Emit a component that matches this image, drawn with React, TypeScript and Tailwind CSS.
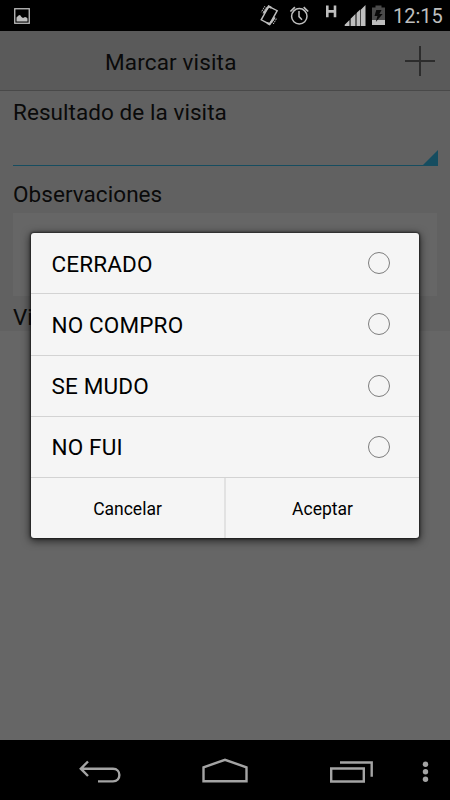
import { useState } from "react";

const options = ["CERRADO", "NO COMPRO", "SE MUDO", "NO FUI"];

function StatusBar() {
  return (
    <div className="flex h-[31px] items-center bg-black text-[#bebebe]">
      <svg className="ml-3.5 h-4 w-4" viewBox="0 0 16 16">
        <rect x="0.75" y="0.75" width="14.5" height="14.5" fill="none" stroke="currentColor" strokeWidth="1.3" />
        <path d="M2.5 13.5V9.5l2-2 1.5-.5 1.5 2 1.5 1 2-1 1.5.5 1 1v3z" fill="currentColor" />
      </svg>
      <svg className="ml-auto h-[31px] w-[135px]" viewBox="255 0 135 31" fill="none" stroke="currentColor">
        <path d="M268.7 6.4L277.2 10.7L269.6 24.2L261.2 19.8Z" strokeWidth="1.4" />
        <path d="M263.6 13.5L268.7 6.4L271.5 7.8M274.8 17.5L269.6 24.2L267 22.8" strokeWidth="2" />
        <path d="M264.8 6.2l-3.5 6M266.4 7.2l-3.5 6M273.3 24l3.6-6M271.5 23l3.6-6" strokeWidth="1" strokeDasharray="1.5 0.7" />
        <circle cx="299.3" cy="16.3" r="7.7" strokeWidth="1.5" />
        <path d="M299 11v5.6l3 3.2" strokeWidth="1.5" />
        <path d="M290.4 11.5l4.5-4.3M308.2 11.5l-4.5-4.3" strokeWidth="1.7" />
        <path d="M327.3 5.5v11.7M335 5.5v11.7M327.3 11.4h7.7" strokeWidth="2.6" />
        <g fill="currentColor" stroke="none">
          <path d="M344.7 26v-1.2l4.8-4.8v6zM350.6 26v-7.2l4.5-4.5V26zM360.8 26V9.8l4.7-4.8v21z" />
          <path d="M357 26V12.6l3.2-3.2V26z" />
          <path d="M355.1 26V14.4l1.9-1.9V26z" opacity="0.5" />
          <path d="M372 20h13v5h-13z" />
          <path d="M372 7.5h3.5V5.5h6v2h3.5V20h-13z" fill="#4a4a4a" />
          <path d="M376.3 10h5.2l-2.1 4h3.2l-6.8 8 1.7-6h-3z" fill="#080808" />
        </g>
      </svg>
      <span className="ml-[3px] mr-[8px] w-[49px] whitespace-nowrap pt-[2px] text-[20px] leading-[29px]">12:15</span>
    </div>
  );
}

function NavigationBar() {
  return (
    <div className="h-[60px] bg-black">
      <svg className="h-[60px] w-full" viewBox="0 740 450 60" fill="none" stroke="#a4a4a4" strokeWidth="2.4">
        <path d="M88 761.5l-7.2 7.2 7.2 7.3M81 768.8h32c8.5 0 8.5 12.6 0 12.6H98" />
        <path d="M203.5 781.3v-14l21.5-7.5 21.5 7.5v14z" />
        <path d="M331.2 768.5h32.6v13h-32.6zM340 762.5h31.7v14.2" />
        <g fill="#a4a4a4" stroke="none">
          <circle cx="425.5" cy="764.3" r="2.7" />
          <circle cx="425.5" cy="771.8" r="2.7" />
          <circle cx="425.5" cy="779.2" r="2.7" />
        </g>
      </svg>
    </div>
  );
}

export default function App() {
  const [selected, setSelected] = useState<string | null>(null);

  return (
    <div className="relative flex h-[800px] w-[450px] flex-col overflow-hidden bg-[#666666] font-[Roboto,sans-serif] text-black">
      <StatusBar />
      <header className="flex h-[60px] items-center border-b border-[#494949] bg-[#5a5a5a]">
        <h1 className="ml-[105px] mt-1 whitespace-nowrap text-[22.5px] tracking-[0.15px] text-[#0a0a0a]">Marcar visita</h1>
        <svg className="ml-auto mr-[15px] h-[30px] w-[30px]" viewBox="0 0 30 30" stroke="#2c2c2c" strokeWidth="2">
          <path d="M0 15h30M15 0v30" />
        </svg>
      </header>
      <main className="flex-1 text-[#0a0a0a]">
        <div className="h-[240px] bg-[#616161] px-[13px] pt-[6px]">
          <div className="h-[31px] whitespace-nowrap text-[22.5px] leading-[30px] tracking-[0.06px]">Resultado de la visita</div>
          <div className="-mr-px flex h-[38px] items-end justify-end border-b border-[#164d60]">
            <svg className="h-[15px] w-[15px]" viewBox="0 0 15 15">
              <path d="M15 0v15H0z" fill="#164d60" />
            </svg>
          </div>
          <div className="mt-[13px] h-[34px] whitespace-nowrap text-[22.5px] leading-[30px] tracking-[0.06px]">Observaciones</div>
          <div className="h-[83px] bg-[#666666]" />
          <div className="mt-[7px] h-[28px] text-[22.5px] leading-[29px]">Vi</div>
        </div>
      </main>
      <NavigationBar />

      <div className="absolute left-[31px] top-[233px] w-[388px] overflow-hidden rounded-[3px] bg-[#f5f5f5] shadow-[0_2px_9px_1px_rgba(0,0,0,0.65),0_0_2px_1px_rgba(0,0,0,0.5)]">
        {options.map((option) => (
          <button
            key={option}
            onClick={() => setSelected(option)}
            className="flex h-[61.25px] w-full items-center justify-between border-b border-[#d3d3d3] pl-[20.5px] pr-[29px] text-[22.5px] tracking-[0.15px]"
          >
            <span className="pt-[2.5px]">{option}</span>
            <span className="flex h-[22px] w-[22px] items-center justify-center rounded-full border border-[#7d7d7d]">
              {selected === option && <span className="h-3 w-3 rounded-full bg-[#33b5e5]" />}
            </span>
          </button>
        ))}
        <div className="flex h-[60px] text-[17.5px]">
          <button className="w-[195px] border-r-2 border-[#e2e2e2] pt-[3px]">Cancelar</button>
          <button className="flex-1 pt-[3px]">Aceptar</button>
        </div>
      </div>
    </div>
  );
}
